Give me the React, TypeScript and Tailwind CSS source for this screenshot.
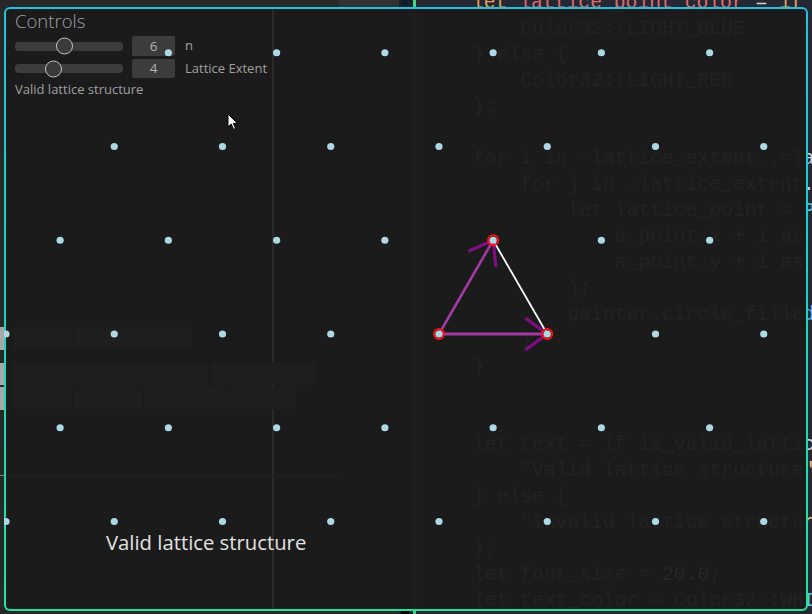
import React from "react";

type Seg = [string, string];

const K = "text-[#e0a05a]";
const V = "text-[#e06c6c]";
const P = "text-[#cfd0d8]";
const T = "text-[#5ec4e0]";
const S = "text-[#e5c07b]";
const N = "text-[#d19a66]";
const F = "text-[#61afef]";

const CODE: Seg[][] = [
  [[K, "let "], [V, "lattice_point_color"], [P, " = "], [K, "if "], [P, "is_valid_lattice {"]],
  [[P, "    "], [T, "Color32"], [P, "::"], [T, "LIGHT_BLUE"]],
  [[P, "} "], [K, "else"], [P, " {"]],
  [[P, "    "], [T, "Color32"], [P, "::"], [T, "LIGHT_RED"]],
  [[P, "};"]],
  [],
  [[K, "for "], [P, "i"], [K, " in "], [P, "-lattice_extent..=lattice_extent {"]],
  [[P, "    "], [K, "for "], [P, "j"], [K, " in "], [P, "-lattice_extent..=lattice_extent {"]],
  [[P, "        "], [K, "let "], [P, "lattice_point = "], [T, "Pos2"], [P, "::"], [F, "new"], [P, "("]],
  [[P, "            a_point.x + i "], [K, "as "], [T, "f32"], [P, " * basis_1.x + j "], [K, "as "], [T, "f32"], [P, " * basis_2.x,"]],
  [[P, "            a_point.y + i "], [K, "as "], [T, "f32"], [P, " * basis_1.y + j "], [K, "as "], [T, "f32"], [P, " * basis_2.y,"]],
  [[P, "        );"]],
  [[P, "        painter."], [F, "circle_filled"], [P, "(lattice_point, "], [N, "4.0"], [P, ", lattice_point_color);"]],
  [[P, "    }"]],
  [[P, "}"]],
  [],
  [],
  [[K, "let "], [P, "text = "], [K, "if "], [P, "is_valid_lattice {"]],
  [[P, "    "], [S, "\"Valid lattice structure\""]],
  [[P, "} "], [K, "else"], [P, " {"]],
  [[P, "    "], [S, "\"Invalid lattice structure\""]],
  [[P, "};"]],
  [[K, "let "], [P, "font_size = "], [N, "20.0"], [P, ";"]],
  [[K, "let "], [P, "text_color = "], [T, "Color32"], [P, "::"], [T, "WHITE"], [P, ";"]],
];

function CodeBlock({ ghost }: { ghost?: boolean }) {
  return (
    <div className="font-['Liberation_Mono','DejaVu_Sans_Mono',monospace] text-[19.7px] leading-[26px] whitespace-pre">
      {CODE.map((line, i) => (
        <div key={i} className="h-[26px]">
          {line.map(([c, t], j) => (
            <span key={j} className={ghost ? (c === N ? "text-[#262626]" : "text-[#222222]") : c}>
              {t}
            </span>
          ))}
        </div>
      ))}
    </div>
  );
}

const O = { x: 439, y: 334 };
const A = { x: 108.25, y: 0 };
const B = { x: 54.125, y: -93.75 };

function latticePoints() {
  const pts: { x: number; y: number }[] = [];
  for (let i = -4; i <= 4; i++) {
    for (let j = -4; j <= 4; j++) {
      const x = O.x + i * A.x + j * B.x;
      const y = O.y + i * A.y + j * B.y;
      if (x > -6 && x < 812 && y > 0 && y < 614) pts.push({ x, y });
    }
  }
  return pts;
}

function Slider({ value, thumb }: { value: string; thumb: string }) {
  return (
    <>
      <div className="relative w-[108px] h-[9px] rounded-[4px] bg-[#3c3c3c]">
        <div
          className={`absolute top-1/2 -translate-y-1/2 w-[17px] h-[17px] rounded-full border-[1.5px] border-[#c4c4c4] bg-[#3a3a3a] ${thumb}`}
        />
      </div>
      <div className="ml-[9px] w-[43px] h-full rounded-[2px] bg-[#3c3c3c] flex items-center justify-center text-[13.5px] text-[#b4b4b4]">
        {value}
      </div>
    </>
  );
}

export default function App() {
  const pts = latticePoints();
  const P0 = { x: 439, y: 334 };
  const P1 = { x: 493.125, y: 240.25 };
  const P2 = { x: 547.25, y: 334 };
  return (
    <div className="relative w-[812px] h-[614px] overflow-hidden bg-[#262626] font-['Open_Sans','Noto_Sans',sans-serif]">
      {/* background desktop */}
      <div className="absolute inset-0 flex">
        <div className="w-[339px] h-full flex flex-col bg-[#282828]">
          <div className="h-[327px]" />
          <div className="h-[23px] bg-[#a8a8a8]" />
          <div className="h-[13px]" />
          <div className="h-[22px] bg-[#a8a8a8]" />
          <div className="h-[2px]" />
          <div className="h-[23px] bg-[#a8a8a8]" />
          <div className="h-[65px]" />
          <div className="h-[1px] bg-[#7a7a7a]" />
        </div>
        <div className="w-[60px] h-full flex flex-col bg-[#282828]">
          <div className="h-[20px] bg-[#323232]" />
        </div>
        <div className="w-[14px] h-full flex flex-col bg-[#1b1f2d]">
          <div className="flex-1 flex">
            <div className="w-[4px]" />
            <div className="w-[5px] bg-[#0f1a2e]" />
          </div>
          <div className="h-[4px] flex">
            <div className="w-[2px]" />
            <div className="w-[8px] bg-black" />
          </div>
        </div>
        <div className="w-[3px] h-full bg-[#3fd97f]" />
        <div className="flex-1 h-full bg-[#252833] pl-[56px] pt-0 overflow-hidden">
          <div className="-mt-[10px]">
            <CodeBlock />
          </div>
        </div>
      </div>

      {/* app window */}
      <div className="absolute left-[4px] top-[7px] w-[804px] h-[604px] rounded-[6px] p-[2px] bg-linear-to-b from-[#1fc2e2] to-[#1fe69c]">
        <div className="relative w-full h-full rounded-[4px] bg-[#1b1b1b] overflow-hidden">
          {/* faint content showing through */}
          <div className="absolute left-[467px] top-[-19px]">
            <CodeBlock ghost />
          </div>
          <div className="absolute left-[266px] top-0 w-[2px] h-full bg-[#2a2a2a]" />
          <div className="absolute left-[407px] top-0 w-[4px] h-full bg-[#1d1d1d]" />
          <div className="absolute left-0 top-[466px] w-[332px] h-[1px] bg-[#212121]" />
          <div className="absolute left-[7px] top-[318px] flex flex-col">
            <div className="h-[22px] flex gap-[2px]">
              <div className="w-[60px] bg-[#1e1e1e]" />
              <div className="w-[68px] bg-[#1e1e1e]" />
              <div className="w-[47px] bg-[#1e1e1e]" />
            </div>
            <div className="h-[22px] mt-[14px] flex gap-[3px]">
              <div className="w-[195px] bg-[#1e1e1e]" />
              <div className="w-[104px] bg-[#1e1e1e]" />
            </div>
            <div className="h-[22px] mt-[2px] flex gap-[2px]">
              <div className="w-[59px] bg-[#1e1e1e]" />
              <div className="w-[68px] bg-[#1e1e1e]" />
              <div className="w-[84px] bg-[#1e1e1e]" />
              <div className="w-[65px] bg-[#1e1e1e]" />
            </div>
          </div>

          {/* Controls panel */}
          <div className="absolute left-[9px] top-[3px] flex flex-col">
            <div className="h-[18.5px] text-[18.5px] leading-[18.5px] text-[#a0a0a0] font-light">Controls</div>
            <div className="mt-[5.5px] h-[20px] flex items-center">
              <Slider value="6" thumb="left-[41px]" />
              <span className="ml-[10px] text-[13px] text-[#a0a0a0]">n</span>
            </div>
            <div className="mt-[3px] h-[19px] flex items-center">
              <Slider value="4" thumb="left-[30px]" />
              <span className="ml-[10px] text-[13px] text-[#a0a0a0]">Lattice Extent</span>
            </div>
            <div className="mt-[3px] text-[13px] leading-[16px] text-[#a0a0a0]">Valid lattice structure</div>
          </div>
        </div>

        {/* canvas drawing */}
        <svg
          className="absolute inset-0 pointer-events-none"
          width={804}
          height={604}
          viewBox="4 7 804 604"
        >
          <line x1={P1.x} y1={P1.y} x2={P2.x} y2={P2.y} stroke="#ffffff" strokeWidth={1.8} />
          <line x1={P0.x} y1={P0.y} x2={P1.x} y2={P1.y} stroke="#a13aa3" strokeWidth={2.6} />
          <line x1={P0.x} y1={P0.y} x2={P2.x} y2={P2.y} stroke="#a13aa3" strokeWidth={2.8} />
          <line x1={P1.x} y1={P1.y} x2={468.4} y2={251.2} stroke="#7f0f80" strokeWidth={3.2} />
          <line x1={P1.x} y1={P1.y} x2={495.9} y2={267.1} stroke="#7f0f80" strokeWidth={3.2} />
          <line x1={P2.x} y1={P2.y} x2={525.4} y2={318.1} stroke="#7f0f80" strokeWidth={3.2} />
          <line x1={P2.x} y1={P2.y} x2={525.4} y2={349.9} stroke="#7f0f80" strokeWidth={3.2} />
          {[P0, P1, P2].map((p, i) => (
            <circle key={i} cx={p.x} cy={p.y} r={5} fill="none" stroke="#ff1010" strokeWidth={2} />
          ))}
          {pts.map((p, i) => (
            <circle key={i} cx={p.x} cy={p.y} r={3.6} fill="#add8e6" />
          ))}
          <text
            x={106}
            y={550}
            fontSize={20.3}
            fill="#e2e2e2"
            fontFamily="'Open Sans', 'Noto Sans', sans-serif"
          >
            Valid lattice structure
          </text>
        </svg>
      </div>

      {/* mouse cursor */}
      <svg className="absolute left-[227px] top-[113px] pointer-events-none" width={14} height={20} viewBox="0 0 14 20">
        <path d="M1 1 L1 14 L4.2 11 L6.6 16.4 L8.6 15.5 L6.3 10.3 L10.5 10.3 Z" fill="#ffffff" stroke="#000000" strokeWidth={1} strokeLinejoin="round" />
      </svg>
    </div>
  );
}
